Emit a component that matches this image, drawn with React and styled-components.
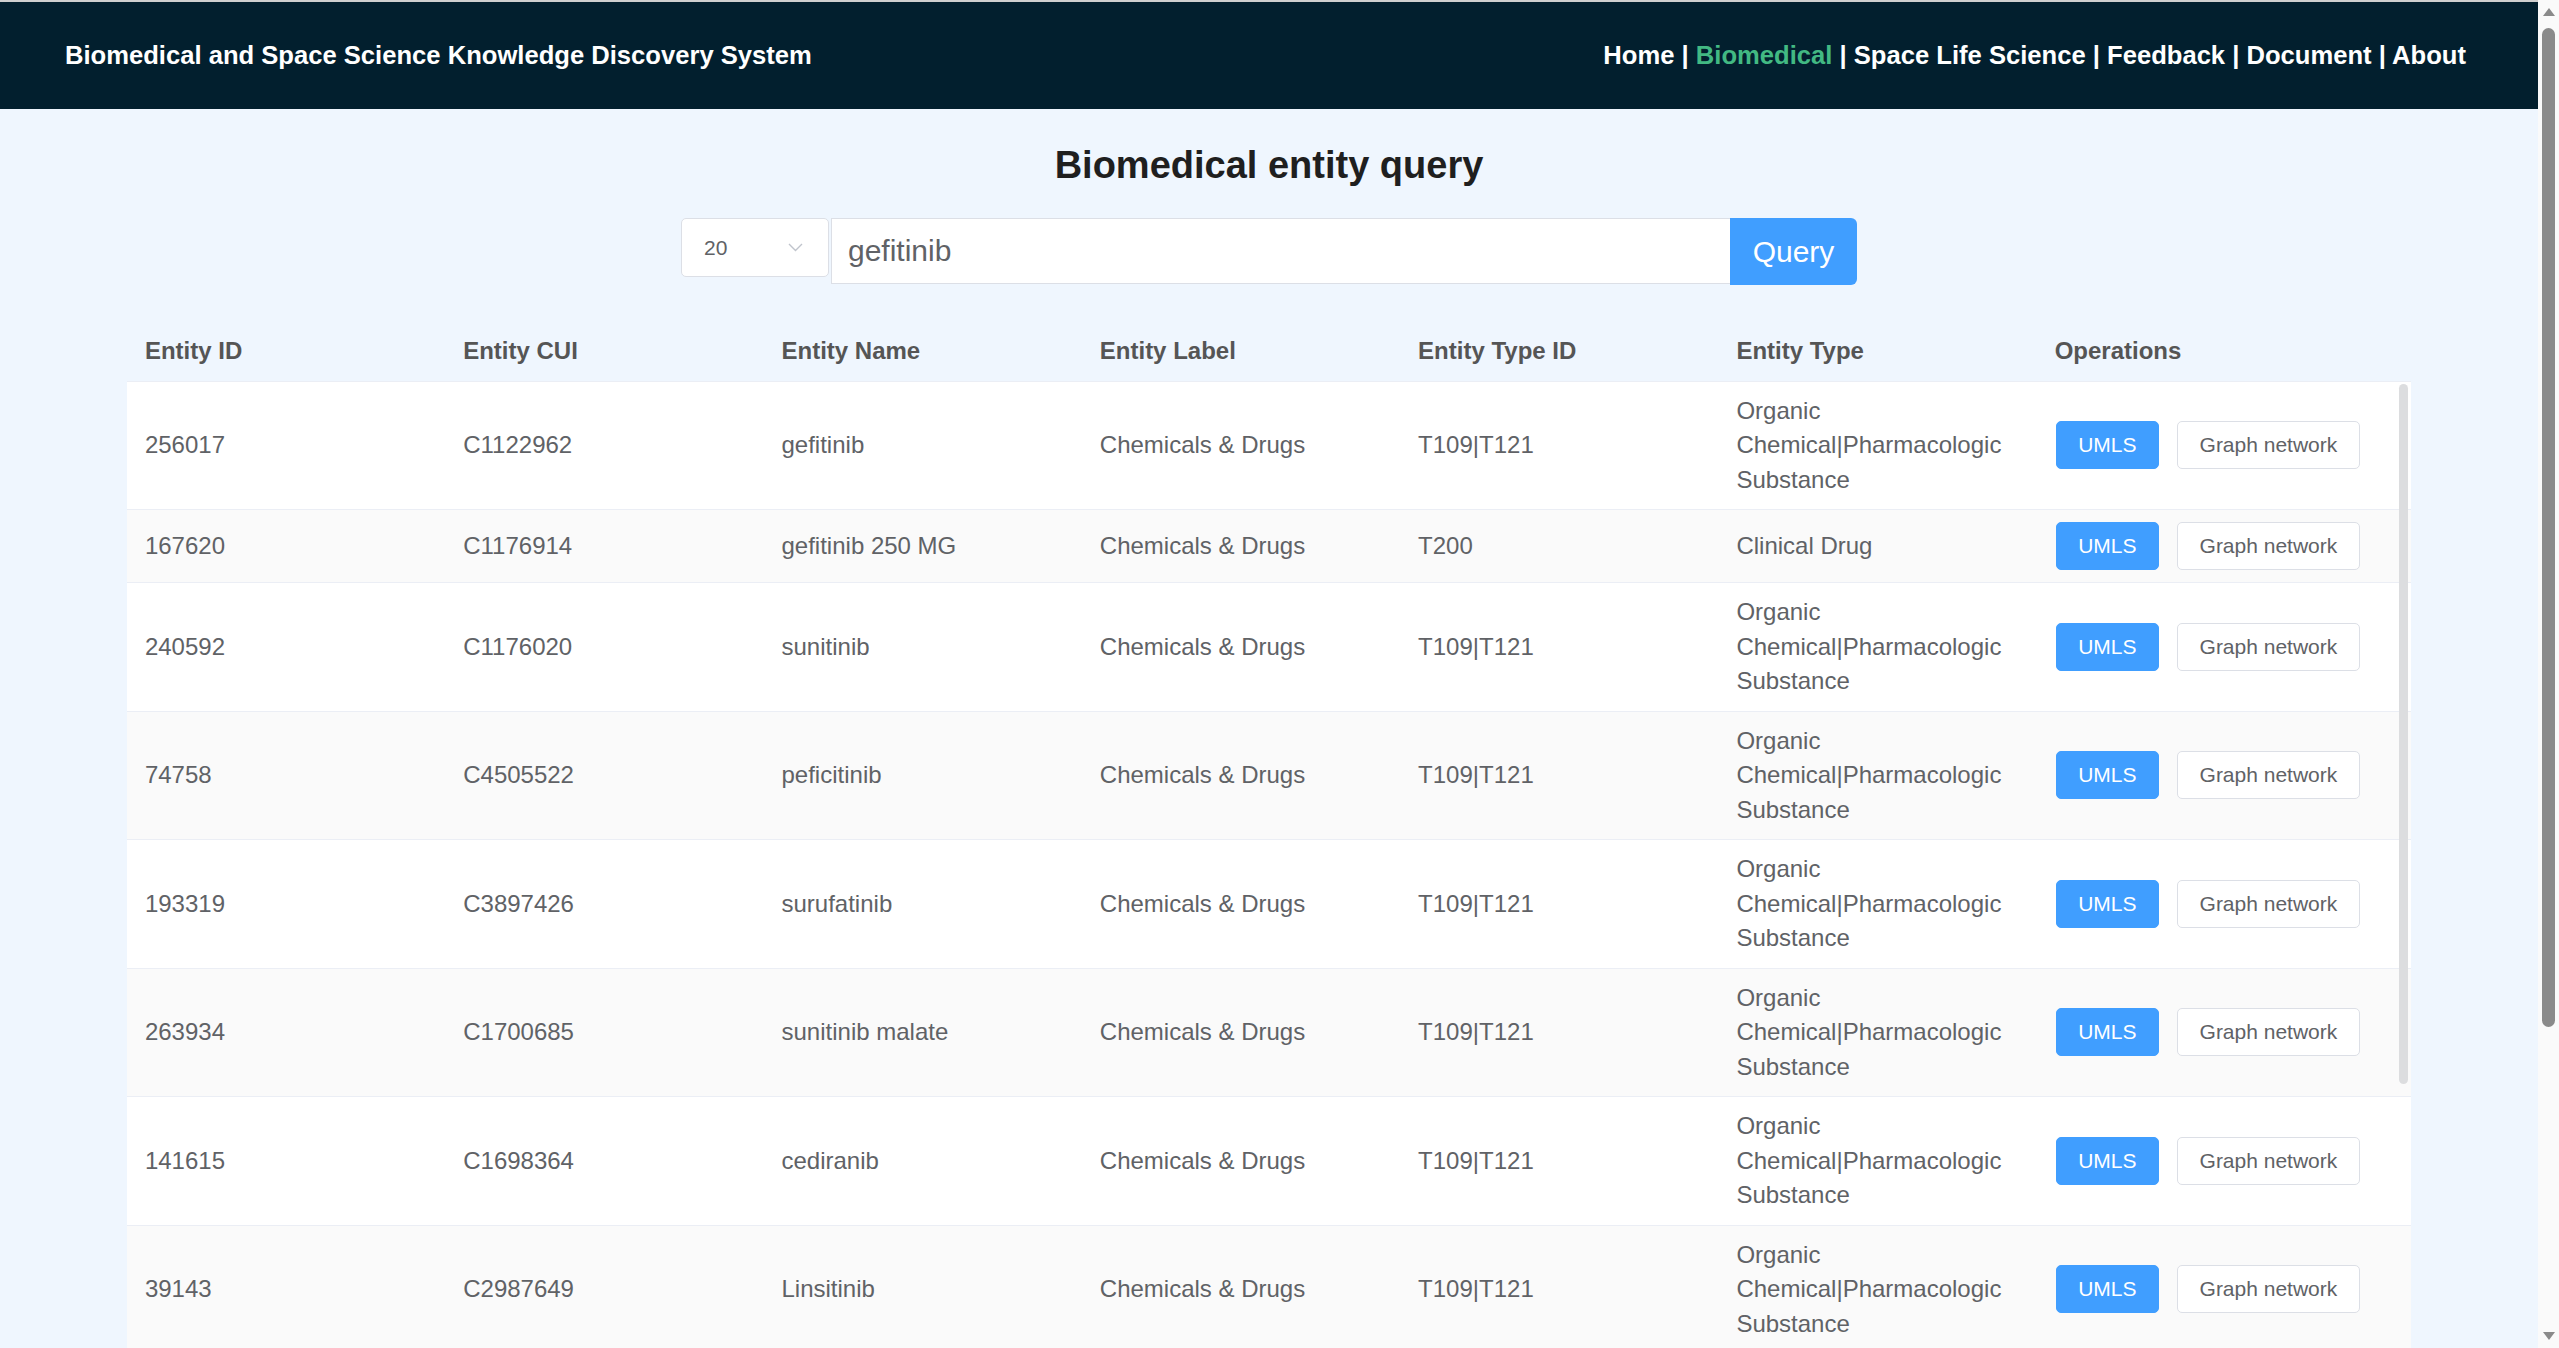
import React from "react";
import styled, { createGlobalStyle } from "styled-components";

const GlobalStyle = createGlobalStyle`
  html, body {
    margin: 0;
    padding: 0;
  }
  body {
    background: #eff6fe;
    font-family: "Liberation Sans", Arial, sans-serif;
  }
  * {
    box-sizing: border-box;
  }
`;

/* the window's classic scrollbar, drawn over the right edge */
const WindowScrollbar = styled.aside`
  position: fixed;
  top: 0;
  right: 0;
  width: 21px;
  height: 100vh;
  background: #fafafa;
  display: flex;
  flex-direction: column;
  align-items: center;
`;

const Arrow = styled.div`
  width: 0;
  height: 0;
  margin: ${(p) => (p.$down ? "0 0 8px" : "8px 0 0")};
  border-left: 6px solid transparent;
  border-right: 6px solid transparent;
  ${(p) => (p.$down ? "border-top" : "border-bottom")}: 8px solid #8a8a8a;
`;

const Track = styled.div`
  flex: 1;
  width: 100%;
  padding: 12px 4px 0;
`;

const Thumb = styled.div`
  height: 999px;
  border-radius: 7px;
  background: #8a8a8a;
`;

const Page = styled.div`
  margin-right: 21px;
`;

const TopBar = styled.header`
  height: 109px;
  border-top: 2px solid #cfcfcf;
  background: #021f2e;
  display: flex;
  align-items: center;
  justify-content: space-between;
  padding: 0 72px 0 65px;
  color: #ffffff;
  font-size: 25.6px;
  font-weight: 700;
`;

const Brand = styled.div`
  white-space: nowrap;
`;

const Nav = styled.nav`
  white-space: nowrap;
`;

const NavLink = styled.a`
  color: ${(p) => (p.$active ? "#42b983" : "#ffffff")};
  text-decoration: none;
`;

const Main = styled.main`
  padding-bottom: 17px;
`;

const PageTitle = styled.h1`
  margin: 33px 0 30px;
  text-align: center;
  font-size: 38px;
  line-height: 46px;
  font-weight: 700;
  color: #1f1f1f;
`;

const SearchRow = styled.div`
  display: flex;
  justify-content: center;
  align-items: flex-start;
`;

const SizeSelect = styled.div`
  width: 148px;
  height: 59px;
  margin-right: 2px;
  background: #ffffff;
  border: 1px solid #dcdfe6;
  border-radius: 5px;
  display: flex;
  align-items: center;
  justify-content: space-between;
  padding: 0 25px 0 22px;
  font-size: 21px;
  color: #606266;
`;

const SearchInput = styled.input`
  width: 899px;
  height: 66px;
  border: 1px solid #dcdfe6;
  border-right: none;
  background: #ffffff;
  padding: 0 16px;
  font-family: inherit;
  font-size: 30px;
  color: #606266;
  outline: none;
`;

const QueryButton = styled.button`
  width: 127px;
  height: 67px;
  border: none;
  border-radius: 0 6px 6px 0;
  background: #409eff;
  color: #ffffff;
  font-family: inherit;
  font-size: 30px;
  cursor: pointer;
`;

const Table = styled.div`
  width: 90%;
  margin: 37px auto 0;
`;

const Grid = styled.div`
  display: grid;
  grid-template-columns: repeat(6, 318.3px) 1fr;
  align-items: center;
  border-bottom: 1px solid #ebeef5;
`;

const HeadRow = styled(Grid)``;

const HeadCell = styled.div`
  padding: 12px 18px;
  line-height: 34.5px;
  font-size: 24px;
  font-weight: 700;
  color: #555555;
`;

const Body = styled.div`
  position: relative;
  height: 1340px;
  overflow: hidden;
  background: #ffffff;
`;

const Row = styled(Grid)`
  background: ${(p) => (p.$striped ? "#fafafa" : "#ffffff")};
`;

const Cell = styled.div`
  padding: 12px 18px;
  line-height: 34.5px;
  font-size: 24px;
  color: #606266;
`;

const Ops = styled(Cell)`
  display: flex;
  align-items: center;
  gap: 18px;
  padding-left: 19px;
`;

const Btn = styled.button`
  height: 48px;
  padding: 0 21.5px;
  border-radius: 5px;
  font-family: inherit;
  font-size: 21px;
  cursor: pointer;
  border: 1px solid ${(p) => (p.$primary ? "#409eff" : "#dcdfe6")};
  background: ${(p) => (p.$primary ? "#409eff" : "#ffffff")};
  color: ${(p) => (p.$primary ? "#ffffff" : "#606266")};
`;

// el-table style overlay thumb
const ScrollThumb = styled.div`
  position: absolute;
  top: 2px;
  right: 3px;
  width: 9px;
  height: 700px;
  border-radius: 5px;
  background: #dcdddf;
`;

const Chevron = () => (
  <svg width="15" height="9" viewBox="0 0 15 9">
    <polyline points="1,1 7.5,7.5 14,1" fill="none" stroke="#c0c4cc" strokeWidth="1.4" />
  </svg>
);

const ORGANIC = "Organic Chemical|Pharmacologic Substance";

const rows = [
  ["256017", "C1122962", "gefitinib", "T109|T121", ORGANIC],
  ["167620", "C1176914", "gefitinib 250 MG", "T200", "Clinical Drug"],
  ["240592", "C1176020", "sunitinib", "T109|T121", ORGANIC],
  ["74758", "C4505522", "peficitinib", "T109|T121", ORGANIC],
  ["193319", "C3897426", "surufatinib", "T109|T121", ORGANIC],
  ["263934", "C1700685", "sunitinib malate", "T109|T121", ORGANIC],
  ["141615", "C1698364", "cediranib", "T109|T121", ORGANIC],
  ["39143", "C2987649", "Linsitinib", "T109|T121", ORGANIC],
];

const navItems = ["Home", "Biomedical", "Space Life Science", "Feedback", "Document", "About"];

export default function App() {
  return (
    <>
      <GlobalStyle />
      <Page>
        <TopBar>
          <Brand>Biomedical and Space Science Knowledge Discovery System</Brand>
          <Nav>
            {navItems.map((item, i) => (
              <React.Fragment key={item}>
                {i > 0 && " | "}
                <NavLink href="#" $active={item === "Biomedical"}>
                  {item}
                </NavLink>
              </React.Fragment>
            ))}
          </Nav>
        </TopBar>

        <Main>
          <PageTitle>Biomedical entity query</PageTitle>

          <SearchRow>
            <SizeSelect>
              <span>20</span>
              <Chevron />
            </SizeSelect>
            <SearchInput defaultValue="gefitinib" />
            <QueryButton>Query</QueryButton>
          </SearchRow>

          <Table>
            <HeadRow>
              <HeadCell>Entity ID</HeadCell>
              <HeadCell>Entity CUI</HeadCell>
              <HeadCell>Entity Name</HeadCell>
              <HeadCell>Entity Label</HeadCell>
              <HeadCell>Entity Type ID</HeadCell>
              <HeadCell>Entity Type</HeadCell>
              <HeadCell>Operations</HeadCell>
            </HeadRow>
            <Body>
              {rows.map(([id, cui, name, typeId, type], i) => (
                <Row key={id} $striped={i % 2 === 1}>
                  <Cell>{id}</Cell>
                  <Cell>{cui}</Cell>
                  <Cell>{name}</Cell>
                  <Cell>Chemicals &amp; Drugs</Cell>
                  <Cell>{typeId}</Cell>
                  <Cell>{type}</Cell>
                  <Ops>
                    <Btn $primary>UMLS</Btn>
                    <Btn>Graph network</Btn>
                  </Ops>
                </Row>
              ))}
              <ScrollThumb />
            </Body>
          </Table>
        </Main>
      </Page>

      <WindowScrollbar>
        <Arrow />
        <Track>
          <Thumb />
        </Track>
        <Arrow $down />
      </WindowScrollbar>
    </>
  );
}
